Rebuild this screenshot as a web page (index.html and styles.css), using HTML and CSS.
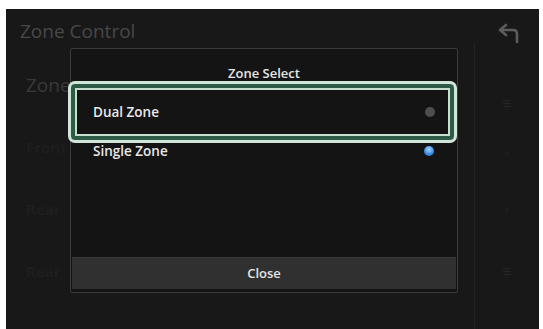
FILE: index.html
```html
<!DOCTYPE html>
<html>
<head>
<meta charset="utf-8">
<link rel="stylesheet" href="styles.css">
</head>
<body>
<div class="screen">
  <div class="header">
    <div class="title">Zone Control</div>
    <svg class="back" width="24" height="22" viewBox="0 0 24 22">
      <path d="M3 7 L9 2 M3 7 L9 12 M3 7 H16 Q20 7 20 11 V19" fill="none" stroke="#5c5c5c" stroke-width="2.6" stroke-linecap="round" stroke-linejoin="round"/>
    </svg>
  </div>
  <div class="body">
    <div class="list">
      <div class="bgrow big">Zone Control</div>
      <div class="bgrow">Front</div>
      <div class="bgrow">Rear</div>
      <div class="bgrow">Rear</div>
    </div>
    <div class="side">
      <div class="sicon">&#8801;</div>
      <div class="sicon">&#708;</div>
      <div class="sicon">&#709;</div>
      <div class="sicon">&#8801;</div>
    </div>
  </div>

  <div class="dialog">
    <div class="dtitle">Zone Select</div>
    <div class="focus">
      <div class="opt">
        <span>Dual Zone</span>
        <span class="dot off"></span>
      </div>
    </div>
    <div class="opt plain">
      <span>Single Zone</span>
      <span class="dot on"></span>
    </div>
    <div class="spacer"></div>
    <div class="close">Close</div>
  </div>
</div>
</body>
</html>
```

FILE: styles.css
```css
html, body {
  margin: 0;
  padding: 0;
  background: #ffffff;
}
body {
  width: 543px;
  height: 329px;
  overflow: hidden;
  font-family: "Open Sans", "Noto Sans", sans-serif;
}
.screen {
  position: relative;
  margin: 9px 4px 0 6px;
  height: 320px;
  background: #181818;
  display: flex;
  flex-direction: column;
}
.header {
  display: flex;
  align-items: center;
  justify-content: space-between;
  padding: 10px 18px 0 14px;
  height: 34px;
  box-sizing: border-box;
}
.title {
  color: #484848;
  font-size: 19px;
  font-weight: 500;
  line-height: 24px;
}
.back {
  margin-top: 6px;
}
.body {
  flex: 1;
  display: flex;
}
.list {
  flex: 1;
  display: flex;
  flex-direction: column;
  padding: 30px 0 0 20px;
  gap: 38px;
}
.bgrow {
  color: #1e1e1e;
  font-size: 15px;
  font-weight: 700;
  line-height: 24px;
}
.bgrow.big {
  color: #393939;
  font-size: 19px;
  font-weight: 500;
}
.side {
  width: 64px;
  border-left: 1px solid #242424;
  display: flex;
  flex-direction: column;
  align-items: center;
  padding-top: 50px;
  gap: 36px;
}
.sicon {
  color: #272727;
  font-size: 16px;
  line-height: 20px;
}
.dialog {
  position: absolute;
  left: 64px;
  top: 39px;
  width: 388px;
  height: 245px;
  box-sizing: border-box;
  border: 1px solid #3b3b3b;
  border-radius: 2px;
  background: #141414;
  display: flex;
  flex-direction: column;
  padding: 0 1px 3px 1px;
}
.dtitle {
  color: #e6e6e6;
  font-size: 13px;
  font-weight: 600;
  text-align: center;
  height: 32px;
  line-height: 20px;
  padding-top: 14px;
  box-sizing: border-box;
}
.focus {
  margin: 0 -1px 0 -4px;
  height: 62px;
  box-sizing: border-box;
  border: 3px solid #cfe6d8;
  border-radius: 7px;
  box-shadow: inset 0 0 0 4px #2f5a45, inset 0 0 0 6px #c7dfcf;
  display: flex;
  align-items: center;
  padding: 0 19px 0 22px;
}
.opt {
  flex: 1;
  display: flex;
  align-items: center;
  justify-content: space-between;
  color: #e8e8e8;
  font-size: 13.5px;
  font-weight: 600;
}
.opt.plain {
  flex: none;
  height: 24px;
  margin-top: -4px;
  padding: 0 22px 0 21px;
}
.dot {
  width: 10px;
  height: 10px;
  border-radius: 50%;
}
.dot.off {
  background: #4e4e4e;
}
.dot.on {
  background: radial-gradient(circle at 50% 35%, #a8d6ff 0, #3b8fe6 55%, #2a6fc0 100%);
}
.spacer {
  flex: 1;
}
.close {
  height: 31px;
  background: #303030;
  border-top: 1px solid #3a3a3a;
  color: #e6e6e6;
  font-size: 13px;
  font-weight: 600;
  text-align: center;
  line-height: 30px;
}
```
